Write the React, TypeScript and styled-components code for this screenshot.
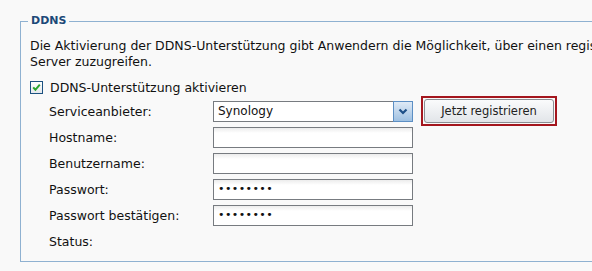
import React from 'react';
import styled, { createGlobalStyle } from 'styled-components';

const GlobalStyle = createGlobalStyle`
  html, body {
    margin: 0;
    padding: 0;
    background: #f9f9f9;
    overflow: hidden;
  }
  body {
    font-family: "DejaVu Sans", Verdana, sans-serif;
    font-size: 12.5px;
    color: #111;
  }
`;

const Page = styled.div`
  width: 592px;
  height: 271px;
  padding-top: 14px;
  box-sizing: border-box;
  overflow: hidden;
`;

const Fieldset = styled.fieldset`
  margin: 0 0 0 20px;
  padding: 10px 0 7px 9px;
  width: 620px;
  box-sizing: border-box;
  border: 1px solid #8fb1d1;
  min-width: 0;
`;

const Legend = styled.legend`
  margin-left: -2px;
  padding: 0 3px;
  color: #1c4978;
  font-weight: bold;
  font-size: 11px;
  line-height: 14px;
`;

const Intro = styled.p`
  margin: 0 0 10px;
  line-height: 16px;
  white-space: nowrap;
`;

const CheckRow = styled.label`
  display: flex;
  align-items: center;
  gap: 7px;
  height: 14px;
  margin-bottom: 4px;
`;

const CheckBox = styled.span`
  width: 11px;
  height: 11px;
  border: 1px solid #1c5180;
  background: linear-gradient(#ffffff, #e4e8ec);
  display: flex;
  align-items: center;
  justify-content: center;
`;

const Form = styled.div`
  display: grid;
  grid-template-columns: 164px 200px auto;
  grid-auto-rows: 26px;
  align-items: center;
  padding-left: 19px;
`;

const Label = styled.span`
  line-height: 15px;
`;

const Field = styled.div<{ $select?: boolean }>`
  height: 21px;
  box-sizing: border-box;
  border: 1px solid #777b80;
  background: linear-gradient(#ececec 0, #ffffff 5px);
  display: flex;
  align-items: center;
  padding-left: 4px;
  font-size: 12px;
  ${(p) => p.$select && 'background: #fff;'}
`;

const Value = styled.span`
  flex: 1;
  font-size: 12px;
`;

const Dots = styled.span`
  font-size: 11px;
  letter-spacing: 0.4px;
  line-height: 12px;
`;

const ArrowBox = styled.span`
  width: 18px;
  align-self: stretch;
  margin: -1px -1px -1px 0;
  border: 1px solid #5c8fc4;
  background: linear-gradient(#dfeaf6, #9fc1e2);
  display: flex;
  align-items: center;
  justify-content: center;
`;

const Highlight = styled.div`
  margin-left: 8px;
  width: 136px;
  height: 30px;
  box-sizing: border-box;
  border: 2px solid #a4161e;
  padding: 1px;
  align-self: start;
  margin-top: -2px;
`;

const Button = styled.button`
  width: 100%;
  height: 24px;
  border: 1px solid #8a8e93;
  border-radius: 3px;
  background: linear-gradient(#fafbfc, #e2e5e9);
  font-family: "DejaVu Sans", Verdana, sans-serif;
  font-size: 11.5px;
  color: #222;
  padding: 0;
`;

const Empty = styled.span``;

const App: React.FC = () => {
  return (
    <Page>
      <GlobalStyle />
      <Fieldset>
        <Legend>DDNS</Legend>
        <Intro>
          Die Aktivierung der DDNS-Unterstützung gibt Anwendern die Möglichkeit, über einen registrierten
          <br />
          Server zuzugreifen.
        </Intro>
        <CheckRow>
          <CheckBox>
            <svg width="9" height="9" viewBox="0 0 9 9">
              <path d="M1.2 4.4 L3.4 6.8 L7.8 1.6" fill="none" stroke="#2aa52e" strokeWidth="2" />
            </svg>
          </CheckBox>
          DDNS-Unterstützung aktivieren
        </CheckRow>
        <Form>
          <Label>Serviceanbieter:</Label>
          <Field $select>
            <Value>Synology</Value>
            <ArrowBox>
              <svg width="10" height="7" viewBox="0 0 10 7">
                <path d="M1.5 1.5 L5 5 L8.5 1.5" fill="none" stroke="#1d4f87" strokeWidth="2.2" />
              </svg>
            </ArrowBox>
          </Field>
          <Highlight>
            <Button>Jetzt registrieren</Button>
          </Highlight>

          <Label>Hostname:</Label>
          <Field />
          <Empty />

          <Label>Benutzername:</Label>
          <Field />
          <Empty />

          <Label>Passwort:</Label>
          <Field>
            <Dots>••••••••</Dots>
          </Field>
          <Empty />

          <Label>Passwort bestätigen:</Label>
          <Field>
            <Dots>••••••••</Dots>
          </Field>
          <Empty />

          <Label>Status:</Label>
          <Empty />
          <Empty />
        </Form>
      </Fieldset>
    </Page>
  );
};

export default App;
